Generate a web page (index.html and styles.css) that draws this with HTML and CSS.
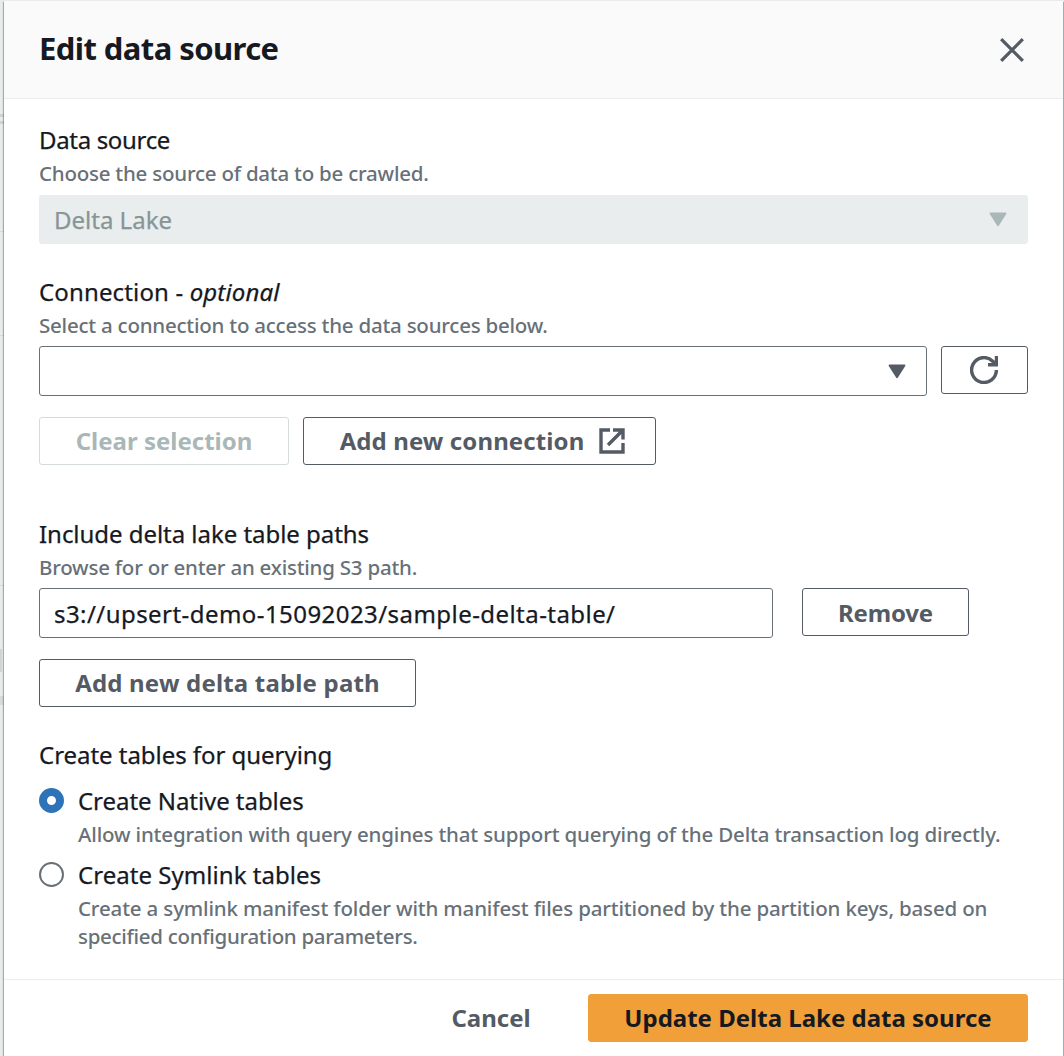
FILE: index.html
```
<!DOCTYPE html>
<html lang="en">
<head>
<meta charset="utf-8">
<title>Edit data source</title>
<link rel="stylesheet" href="styles.css">
</head>
<body>
<main class="modal">
  <header class="modal-header">
    <h1 class="title">Edit data source</h1>
    <svg class="close" viewBox="0 0 26 26" width="26" height="26"><path d="M2.2 2.2 23.8 23.8M23.8 2.2 2.2 23.8" fill="none" stroke="currentColor" stroke-width="3.3"/></svg>
  </header>

  <section class="content">
    <div class="field source">
      <div class="label ls-source">Data source</div>
      <div class="desc">Choose the source of data to be crawled.</div>
      <div class="select disabled">
        <span class="value">Delta Lake</span>
        <svg class="caret" viewBox="0 0 18 15" width="18" height="15"><path d="M1.5 1.5h15L9 13.3z" fill="currentColor" stroke="currentColor" stroke-width="1.8" stroke-linejoin="round"/></svg>
      </div>
    </div>

    <div class="field connection">
      <div class="label ls-connection">Connection - <i>optional</i></div>
      <div class="desc">Select a connection to access the data sources below.</div>
      <div class="row">
        <div class="select grow">
          <span class="value"></span>
          <svg class="caret" viewBox="0 0 18 15" width="18" height="15"><path d="M1.5 1.5h15L9 13.3z" fill="currentColor" stroke="currentColor" stroke-width="1.8" stroke-linejoin="round"/></svg>
        </div>
        <button class="btn refresh">
          <svg viewBox="0 0 28 28" width="28" height="28"><path d="M26.4 14A12.4 12.4 0 1 1 22.7 5.2L26 8.5M26.5 0V8.8H18" fill="none" stroke="currentColor" stroke-width="3.4"/></svg>
        </button>
      </div>
      <div class="row actions">
        <button class="btn clear" disabled>Clear selection</button>
        <button class="btn add-connection">Add new connection
          <svg viewBox="0 0 26 26" width="26" height="26"><path d="M11 2H2V24H24V15M14 2H24V11.5M24 2 9 17" fill="none" stroke="currentColor" stroke-width="3.4"/></svg>
        </button>
      </div>
    </div>

    <div class="field paths">
      <div class="label">Include delta lake table paths</div>
      <div class="desc">Browse for or enter an existing S3 path.</div>
      <div class="row path-row">
        <div class="input">s3://upsert-demo-15092023/sample-delta-table/</div>
        <button class="btn remove">Remove</button>
      </div>
      <button class="btn add-path">Add new delta table path</button>
    </div>

    <div class="field tables">
      <div class="label">Create tables for querying</div>
      <div class="radio">
        <span class="dot checked"></span>
        <div>
          <div class="radio-label">Create Native tables</div>
          <div class="radio-desc">Allow integration with query engines that support querying of the Delta transaction log directly.</div>
        </div>
      </div>
      <div class="radio">
        <span class="dot"></span>
        <div>
          <div class="radio-label ls-symlink">Create Symlink tables</div>
          <div class="radio-desc">Create a symlink manifest folder with manifest files partitioned by the partition keys, based on <span class="ls-tail">specified configuration parameters.</span></div>
        </div>
      </div>
    </div>
  </section>

  <footer class="modal-footer">
    <button class="btn cancel">Cancel</button>
    <button class="btn primary">Update Delta Lake data source</button>
  </footer>
</main>
</body>
</html>
```
FILE: styles.css
```
* { box-sizing: border-box; }

body {
  margin: 0;
  height: 1056px;
  padding: 1px 1px 0 4px;
  overflow: hidden;
  /* edges of the page that lies behind the dialog */
  background:
    linear-gradient(#cfd3d3, #cfd3d3) 0 114px / 4px 3px no-repeat,
    linear-gradient(#cfd3d3, #cfd3d3) 0 121px / 4px 3px no-repeat,
    linear-gradient(#d5dbdb, #d5dbdb) 0 231px / 4px 1px no-repeat,
    linear-gradient(#d5dbdb, #d5dbdb) 0 335px / 4px 1px no-repeat,
    linear-gradient(#d5dbdb, #d5dbdb) 0 585px / 4px 1px no-repeat,
    linear-gradient(#d2d5d5, #d2d5d5) 0 649px / 2px 23px no-repeat,
    linear-gradient(#d8dbdb, #d8dbdb) 0 696px / 4px 9px no-repeat,
    #e9eced;
  font-family: "Noto Sans", sans-serif;
  color: #16191f;
}

.modal {
  height: 1055px;
  display: flex;
  flex-direction: column;
  background: #fff;
  box-shadow: -1px 1px 1px rgba(0, 28, 36, 0.3), 1px 1px 1px rgba(0, 28, 36, 0.3);
}

.modal-header {
  height: 98px;
  padding: 0 38px 0 35px;
  display: flex;
  align-items: center;
  justify-content: space-between;
  background: #fafafa;
  border-bottom: 1px solid #eaeded;
}

.title {
  margin: 0 0 4px;
  font-size: 31px;
  font-weight: 700;
  line-height: 40px;
  letter-spacing: -0.58px;
}

.close { color: #545b64; margin-top: 1px; }

.content {
  flex: 1;
  padding: 23px 35px 0;
}

.label, .radio-label, .select, .input { -webkit-text-stroke: 0.25px currentColor; }

.label {
  height: 36px;
  font-size: 24px;
  line-height: 36px;
  letter-spacing: -0.04px;
  white-space: nowrap;
}
.ls-source { letter-spacing: -0.33px; }
.ls-connection { letter-spacing: 0.14px; }

.desc {
  height: 29px;
  font-size: 20.5px;
  font-weight: 500;
  line-height: 31px;
  letter-spacing: -0.23px;
  color: #687078;
  white-space: nowrap;
}

.row { display: flex; align-items: flex-start; gap: 14px; }
.grow { flex: 1; }

.select, .input {
  height: 50px;
  padding: 0 20px 0 14px;
  display: flex;
  align-items: center;
  justify-content: space-between;
  border: 1px solid #687078;
  border-radius: 3px;
  font-size: 24px;
}
.caret { color: #545b64; }
.select.disabled {
  height: 49px;
  margin-top: 8px;
  background: #e9eded;
  border-color: #e9eded;
  color: #879596;
}
.select.disabled .caret { color: #aab7b8; }

.connection { margin-top: 30px; }
.connection .row { margin-top: 7px; }
.connection .actions { margin-top: 21px; }

.btn {
  height: 48px;
  padding: 0;
  display: flex;
  align-items: center;
  justify-content: center;
  background: #fff;
  border: 1px solid #545b64;
  border-radius: 3px;
  color: #545b64;
  font-family: inherit;
  font-size: 24px;
  font-weight: 700;
  line-height: 36px;
  white-space: nowrap;
}
.refresh { width: 87px; padding-right: 2px; }
.clear { width: 250px; border-color: #d5dbdb; color: #aab7b8; }
.add-connection { width: 353px; padding-left: 6px; gap: 15px; letter-spacing: 0.1px; }

.paths { margin-top: 51px; }
.path-row { margin-top: 7px; gap: 29px; }
.input { width: 734px; letter-spacing: 0.44px; }
.remove { width: 167px; padding-top: 1px; letter-spacing: -0.2px; }
.add-path { width: 377px; margin-top: 21px; letter-spacing: 0.18px; }

.tables { margin-top: 30px; }
.tables .label { margin-bottom: 9px; }
.radio { display: flex; gap: 14px; margin-bottom: 8px; }
.dot {
  flex: none;
  width: 25px;
  height: 25px;
  margin-top: 6px;
  border: 2px solid #687078;
  border-radius: 50%;
}
.dot.checked { border: 8px solid #2e73b8; }
.radio-label {
  height: 38px;
  font-size: 24px;
  line-height: 38px;
  letter-spacing: -0.05px;
}
.ls-symlink { letter-spacing: 0.04px; }
.radio-desc {
  width: 940px;
  font-size: 20.5px;
  font-weight: 500;
  line-height: 28px;
  letter-spacing: -0.16px;
  color: #687078;
}
.ls-tail { letter-spacing: -0.3px; }

.modal-footer {
  height: 77px;
  padding: 14px 35px 0 0;
  display: flex;
  justify-content: flex-end;
  border-top: 1px solid #eaeded;
}
.cancel { width: 152px; margin-right: 21px; border-color: transparent; }
.primary { width: 440px; background: #f19f39; border-color: #f19f39; color: #16191f; }
```
